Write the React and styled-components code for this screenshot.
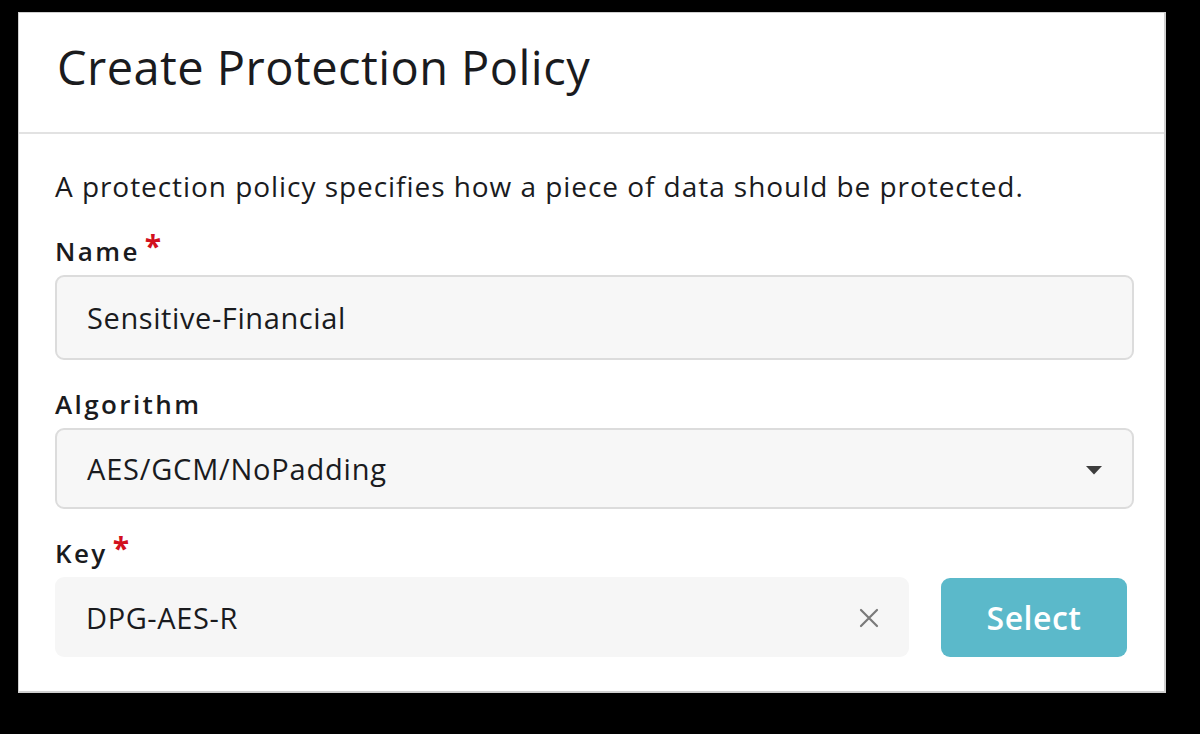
import React from "react";
import styled, { createGlobalStyle } from "styled-components";

const GlobalStyle = createGlobalStyle`
  html, body {
    margin: 0;
    padding: 0;
    background: #000;
    font-family: "Open Sans", "Noto Sans", sans-serif;
    color: #1c1d20;
  }
`;

const ClearIcon = () => (
  <svg width="20" height="20" viewBox="0 0 20 20" aria-hidden="true">
    <path
      d="M2 2 L18 18 M18 2 L2 18"
      stroke="#7a7a7a"
      strokeWidth="2.2"
      strokeLinecap="round"
    />
  </svg>
);

const Caret = () => (
  <svg width="16" height="9" viewBox="0 0 16 9" aria-hidden="true">
    <path d="M0 0 H16 L8 8.5 Z" fill="#3d3d3d" />
  </svg>
);

const Field = ({ label, required, children }) => (
  <FieldGroup>
    <Label>
      {label}
      {required && <Star>*</Star>}
    </Label>
    {children}
  </FieldGroup>
);

const App = () => {
  return (
    <>
      <GlobalStyle />
      <Card>
        <Header>
          <Title>Create Protection Policy</Title>
        </Header>
        <Body>
          <Description>
            A protection policy specifies how a piece of data should be
            protected.
          </Description>
          <Field label="Name" required>
            <TextBox>Sensitive-Financial</TextBox>
          </Field>
          <Field label="Algorithm">
            <SelectBox>
              <span>AES/GCM/NoPadding</span>
              <Caret />
            </SelectBox>
          </Field>
          <Field label="Key" required>
            <KeyRow>
              <KeyBox>
                <span>DPG-AES-R</span>
                <ClearButton aria-label="clear">
                  <ClearIcon />
                </ClearButton>
              </KeyBox>
              <SelectButton>Select</SelectButton>
            </KeyRow>
          </Field>
        </Body>
      </Card>
    </>
  );
};

const Card = styled.div`
  box-sizing: border-box;
  margin: 12px 0 0 18px;
  width: 1148px;
  height: 681px;
  background: #fff;
  border: 1px solid #cfcfcf;
  border-right-width: 2px;
  border-bottom-width: 2px;
  display: flex;
  flex-direction: column;
`;

const Header = styled.div`
  box-sizing: border-box;
  height: 121px;
  padding: 22px 0 0 38px;
  border-bottom: 2px solid #e2e2e2;
`;

const Title = styled.h1`
  margin: 0;
  font-size: 47px;
  font-weight: 500;
  letter-spacing: 0.45px;
  line-height: 64px;
  color: #1a1b1e;
`;

const Body = styled.div`
  padding: 34px 30px 0 36px;
  display: flex;
  flex-direction: column;
`;

const Description = styled.p`
  margin: 0 0 30px;
  font-size: 28px;
  letter-spacing: 0.95px;
  line-height: 36px;
  color: #1a1b1e;
`;

const FieldGroup = styled.div`
  display: flex;
  flex-direction: column;
  gap: 7px;
  margin-bottom: 27px;
`;

const Label = styled.div`
  display: flex;
  align-items: flex-start;
  font-size: 26px;
  font-weight: 600;
  letter-spacing: 2.4px;
  line-height: 34px;
  color: #1a1b1e;
`;

const Star = styled.span`
  color: #d2101e;
  font-weight: 700;
  font-size: 30px;
  line-height: 24px;
  margin-left: 5px;
  letter-spacing: 0;
`;

const Box = styled.div`
  box-sizing: border-box;
  display: flex;
  align-items: center;
  padding: 0 30px;
  border: 2px solid #dcdcdc;
  border-radius: 9px;
  background: #f7f7f7;
  font-size: 29px;
  letter-spacing: 0.6px;
  color: #1a1b1e;
`;

const TextBox = styled(Box)`
  height: 85px;
`;

const SelectBox = styled(Box)`
  height: 81px;
  justify-content: space-between;
  letter-spacing: 0.8px;

  svg {
    margin-top: 4px;
  }
`;

const KeyRow = styled.div`
  display: flex;
  align-items: center;
  gap: 32px;
  padding-right: 7px;
`;

const KeyBox = styled(Box)`
  flex: 1;
  height: 80px;
  border: none;
  background: #f6f6f6;
  padding: 0 30px 0 31px;
  justify-content: space-between;
`;

const ClearButton = styled.span`
  display: flex;
  align-items: center;
  margin-top: 2px;
`;

const SelectButton = styled.button`
  box-sizing: border-box;
  width: 186px;
  height: 79px;
  border: none;
  border-radius: 9px;
  background: #5bb9ca;
  color: #fff;
  font-family: "Open Sans", "Noto Sans", sans-serif;
  font-size: 32px;
  font-weight: 600;
  letter-spacing: 0.5px;
  cursor: pointer;
`;

export default App;
